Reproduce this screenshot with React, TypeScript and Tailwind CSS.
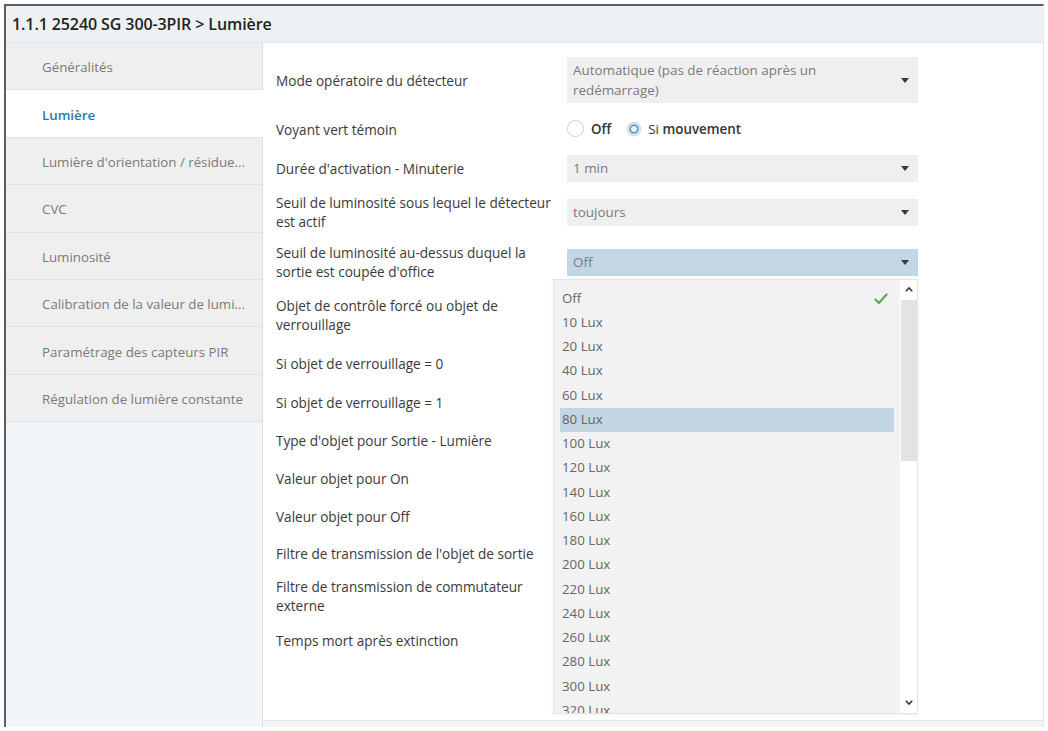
import React from "react";

const sections = [
  "Généralités",
  "Lumière",
  "Lumière d'orientation / résidue...",
  "CVC",
  "Luminosité",
  "Calibration de la valeur de lumi...",
  "Paramétrage des capteurs PIR",
  "Régulation de lumière constante",
];

const luxValues = [
  "Off",
  "10 Lux",
  "20 Lux",
  "40 Lux",
  "60 Lux",
  "80 Lux",
  "100 Lux",
  "120 Lux",
  "140 Lux",
  "160 Lux",
  "180 Lux",
  "200 Lux",
  "220 Lux",
  "240 Lux",
  "260 Lux",
  "280 Lux",
  "300 Lux",
  "320 Lux",
];

function Caret() {
  return (
    <svg width="8" height="5" viewBox="0 0 8 5" className="shrink-0">
      <path d="M0 0 H8 L4 5 Z" fill="#3a3a3a" />
    </svg>
  );
}

function Select({
  children,
  tall = false,
  active = false,
}: {
  children: React.ReactNode;
  tall?: boolean;
  active?: boolean;
}) {
  return (
    <div
      className={
        (tall ? "h-[46px] leading-[20px] " : "h-[27px] ") +
        (active ? "bg-[#c3d6e4] " : "bg-[#efefef] ") +
        "w-[351px] flex items-center justify-between pl-[6px] pr-[9px] text-[13.4px] text-[#7a7a7a]"
      }
    >
      <div>{children}</div>
      <Caret />
    </div>
  );
}

function LuxList() {
  return (
    <div className="absolute top-[calc(100%+3px)] left-[-14px] w-[365px] h-[435px] flex bg-white border border-[#e4e4e4] shadow-[0_1px_3px_rgba(0,0,0,0.06)] z-10">
      <div className="flex-1 bg-[#f2f2f2] pt-[7px] overflow-hidden">
        {luxValues.map((v) => (
          <div
            key={v}
            className={
              (v === "80 Lux" ? "bg-[#c2d5e3] " : "") +
              "h-[24.25px] mx-[6px] pl-[2px] pr-[6px] flex items-center justify-between text-[13.3px] text-[#666]"
            }
          >
            <span>{v}</span>
            {v === "Off" && (
              <svg width="14" height="12" viewBox="0 0 14 12">
                <path
                  d="M1.5 6.5 L5 10 L12.5 1.5"
                  fill="none"
                  stroke="#5fa55f"
                  strokeWidth="2.2"
                  strokeLinecap="round"
                  strokeLinejoin="round"
                />
              </svg>
            )}
          </div>
        ))}
      </div>
      <div className="w-[17px] flex flex-col items-stretch">
        <div className="h-[20px] flex items-center justify-center">
          <svg width="8" height="5" viewBox="0 0 8 5">
            <path d="M0.8 4.2 L4 1 L7.2 4.2" fill="none" stroke="#333" strokeWidth="1.6" />
          </svg>
        </div>
        <div className="h-[161px] bg-[#e3e3e3] ml-[1px]" />
        <div className="flex-1" />
        <div className="h-[20px] flex items-center justify-center">
          <svg width="8" height="5" viewBox="0 0 8 5">
            <path d="M0.8 0.8 L4 4 L7.2 0.8" fill="none" stroke="#333" strokeWidth="1.6" />
          </svg>
        </div>
      </div>
    </div>
  );
}

function Row({
  h,
  label,
  children,
}: {
  h: string;
  label: React.ReactNode;
  children?: React.ReactNode;
}) {
  return (
    <div className={h + " flex items-center"}>
      <div className="w-[291px] pr-[9px] text-[13.6px] leading-[19px] text-[#3a3a3a]">{label}</div>
      {children}
    </div>
  );
}

export default function App() {
  return (
    <div className="w-[1048px] h-[731px] bg-white overflow-hidden font-['Open_Sans','Noto_Sans',sans-serif]">
      <div className="pt-[4px] pl-[4px]">
        <div className="w-[1040px] h-[723px] border-t-2 border-l-2 border-[#5e5e5e] border-r border-r-[#e6e6e6] flex flex-col">
          {/* title bar */}
          <div className="h-[37px] shrink-0 bg-[#eef1f4] border-b border-[#e2e4e6] flex items-center pl-[6px] text-[16px] font-semibold text-[#222] tracking-[-0.1px]">
            1.1.1 25240 SG 300-3PIR &gt; Lumière
          </div>

          <div className="flex flex-1 min-h-0">
            {/* section navigation */}
            <div className="w-[257px] shrink-0 flex flex-col bg-[#f3f6f9]">
              {sections.map((s) => {
                const sel = s === "Lumière";
                return (
                  <div
                    key={s}
                    className={
                      (sel
                        ? "bg-white text-[#2a78ad] font-semibold border-r-white "
                        : "bg-[#efefef] text-[#7a7a7a] border-r-[#dddddd] ") +
                      "h-[47.4px] shrink-0 flex items-center pt-[4px] pl-[36px] border-b border-b-[#e0e0e0] border-r text-[13.3px] whitespace-nowrap"
                    }
                  >
                    {s}
                  </div>
                );
              })}
              <div className="flex-1 border-r border-[#dddddd]" />
            </div>

            {/* parameters */}
            <div className="flex-1 flex flex-col">
              <div className="flex-1 pt-[9px] pl-[13px]">
                <Row h="h-[56px]" label="Mode opératoire du détecteur">
                  <Select tall>
                    Automatique (pas de réaction après un
                    <br />
                    redémarrage)
                  </Select>
                </Row>
                <Row h="h-[42px]" label="Voyant vert témoin">
                  <div className="flex items-center text-[13.4px] text-[#333] font-semibold">
                    <span className="w-[17px] h-[17px] rounded-full border border-[#cfcfcf] bg-white" />
                    <span className="ml-[7px]">Off</span>
                    <svg width="16" height="16" viewBox="0 0 16 16" className="ml-[15px]">
                      <circle cx="8" cy="8" r="7.5" fill="#d3e2ed" />
                      <circle cx="8" cy="8" r="3.8" fill="#e9f1f7" stroke="#5f8fb2" strokeWidth="1.5" />
                    </svg>
                    <span className="ml-[6px]">
                      <span className="font-normal">Si</span> mouvement
                    </span>
                  </div>
                </Row>
                <Row h="h-[36px]" label="Durée d'activation - Minuterie">
                  <Select>1 min</Select>
                </Row>
                <Row h="h-[52px]" label="Seuil de luminosité sous lequel le détecteur est actif">
                  <Select>toujours</Select>
                </Row>
                <Row h="h-[48px]" label="Seuil de luminosité au-dessus duquel la sortie est coupée d'office">
                  <div className="relative">
                    <Select active>Off</Select>
                    <LuxList />
                  </div>
                </Row>
                <Row h="h-[58px]" label="Objet de contrôle forcé ou objet de verrouillage" />
                <Row h="h-[39px]" label="Si objet de verrouillage = 0" />
                <Row h="h-[38px]" label="Si objet de verrouillage = 1" />
                <Row h="h-[38px]" label="Type d'objet pour Sortie - Lumière" />
                <Row h="h-[38px]" label="Valeur objet pour On" />
                <Row h="h-[38px]" label="Valeur objet pour Off" />
                <Row h="h-[37px]" label="Filtre de transmission de l'objet de sortie" />
                <Row h="h-[48px]" label="Filtre de transmission de commutateur externe" />
                <Row h="h-[40px]" label="Temps mort après extinction" />
              </div>
              <div className="h-[7px] shrink-0 bg-[#f4f4f4] border-t border-[#e6e6e6]" />
            </div>
          </div>
        </div>
      </div>
    </div>
  );
}
